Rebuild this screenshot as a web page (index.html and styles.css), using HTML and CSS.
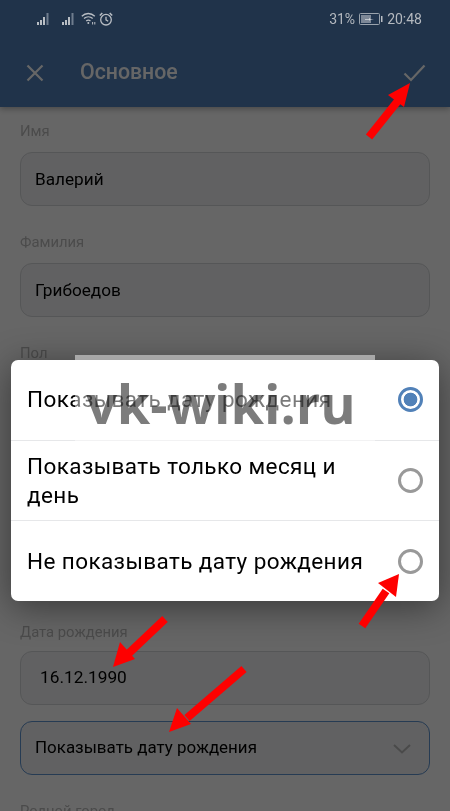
FILE: index.html
```html
<!DOCTYPE html>
<html lang="ru">
<head>
<meta charset="utf-8">
<title>Основное</title>
<link rel="stylesheet" href="styles.css">
</head>
<body>
<div class="app">
  <div class="statusbar">
    <div class="status-left">
      <svg class="sig" width="14" height="14" viewBox="0 0 14 14"><g fill="#b9bec4"><rect x="0" y="10" width="2" height="3"/><rect x="3" y="8" width="2" height="5"/><rect x="6" y="5" width="2" height="8"/></g><rect x="9.5" y="1" width="2" height="12" fill="#6f7d8d"/></svg>
      <svg class="sig sig2" width="14" height="14" viewBox="0 0 14 14"><g fill="#b9bec4"><rect x="0" y="10" width="2" height="3"/><rect x="3" y="8" width="2" height="5"/><rect x="6" y="5" width="2" height="8"/></g><rect x="9.5" y="1" width="2" height="12" fill="#6f7d8d"/></svg>
      <svg class="wifi" width="15" height="13" viewBox="0 0 15 13" fill="none" stroke="#b9bec4" stroke-width="1.3"><path d="M.8 4.2C4.4 .6 10 .6 13.8 4.2"/><path d="M3 6.6c2.500-2.300 6.200-2.300 8.700 0"/><path d="M5.200 8.900c1.300-1 3-1 4.300 0"/><circle cx="7.300" cy="11" r="1" fill="#b9bec4" stroke="none"/><path d="M11.600 10v2.500M13.800 10v2.500" stroke-width="1"/></svg>
      <svg class="alarm" width="14" height="14" viewBox="0 0 14 14" fill="none" stroke="#b9bec4" stroke-width="1.300"><circle cx="7" cy="7.700" r="5.300"/><path d="M7 4.700v3.200l2.200 1.400"/><path d="M.8 3.500 3.300 1M13.200 3.500 10.700 1" stroke-width="1.500"/></svg>
    </div>
    <div class="status-right">
      <span class="status-text">31%</span>
      <svg class="battery" width="24" height="12" viewBox="0 0 24 12"><rect x=".5" y=".5" width="20" height="11" rx="1" fill="#22364f" stroke="#9aa3ad"/><rect x="2" y="2" width="10" height="8" fill="#7d8897"/><path d="M6 6h4l1-1.500V6h4l-4 .8v1.200L10 6.800H6z" fill="#d8dbdf"/><rect x="22" y="3" width="1.500" height="6" fill="#b9bec4"/></svg>
      <span class="status-text">20:48</span>
    </div>
  </div>

  <header class="toolbar">
    <svg class="tool-icon" width="18" height="18" viewBox="0 0 18 18" fill="none" stroke="#fff" stroke-width="2.200"><path d="M1.500 1.500l15 15M16.500 1.500l-15 15"/></svg>
    <h1 class="title">Основное</h1>
    <svg class="tool-check" width="23" height="18" viewBox="0 0 23 18" fill="none" stroke="#fff" stroke-width="2.200"><path d="M1.500 9.500l6.500 6.500L21.500 1.500"/></svg>
  </header>

  <main class="form">
    <section class="group">
      <div class="label">Имя</div>
      <div class="field">Валерий</div>
    </section>
    <section class="group">
      <div class="label">Фамилия</div>
      <div class="field">Грибоедов</div>
    </section>
    <section class="group group-gender">
      <div class="label">Пол</div>
      <div class="field">Мужской</div>
    </section>
    <section class="group">
      <div class="label label-tight">Дата рождения</div>
      <div class="field field-date">16.12.1990</div>
      <div class="field field-select">
        <span>Показывать дату рождения</span>
        <svg width="18" height="10" viewBox="0 0 18 10" fill="none" stroke="#b8b8b8" stroke-width="2"><path d="M1 1l8 7.500L17 1"/></svg>
      </div>
    </section>
    <section class="group">
      <div class="label">Родной город</div>
    </section>
  </main>

  <div class="scrim"></div>

  <div class="dialog">
    <div class="option">
      <span class="option-text">Показывать дату рождения</span>
      <span class="radio radio-on"></span>
    </div>
    <div class="option">
      <span class="option-text">Показывать только месяц и день</span>
      <span class="radio"></span>
    </div>
    <div class="option">
      <span class="option-text">Не показывать дату рождения</span>
      <span class="radio"></span>
    </div>
  </div>

  <div class="watermark"><span class="watermark-text">vk-wiki.ru</span></div>

  <svg class="arrows" width="450" height="811" viewBox="0 0 450 811" fill="#fe0000" stroke="#fe0000" stroke-width="8">
    <path d="M369 137 401 97"/><path d="M410 83 388 95 404 107z" stroke="none"/>
    <path d="M165 619 128 654"/><path d="M113 667 120 642 135 659z" stroke="none"/>
    <path d="M244 669 187 718"/><path d="M169 732 177 708 191 724z" stroke="none"/>
    <path d="M362 626 386 591"/><path d="M399 574 378 583 396 597z" stroke="none"/>
  </svg>
</div>
</body>
</html>
```

FILE: styles.css
```css
* { box-sizing: border-box; }
html, body { margin: 0; height: 100%; }
body { font-family: Roboto, "Liberation Sans", sans-serif; overflow: hidden; background: #fff; }

.app { width: 450px; height: 811px; overflow: hidden; display: flex; flex-direction: column; background: #fff; }

.statusbar {
  position: relative; z-index: 2;
  height: 40px; flex: none;
  display: flex; align-items: center; justify-content: space-between;
  padding: 0 28px 3px 37px;
}
.status-left { display: flex; align-items: center; }
.sig2 { margin-left: 11px; }
.wifi { margin-left: 5px; }
.alarm { margin-left: 3px; }
.status-right { display: flex; align-items: center; gap: 4px; }
.status-text { font-size: 14px; color: #b4b9bf; }

.toolbar {
  height: 107px; flex: none; margin-top: -40px;
  padding: 40px 24px 0 26px;
  display: flex; align-items: center;
  background: #5181b8;
  box-shadow: 0 2px 6px rgba(0,0,0,.3);
  position: relative;
}
.tool-icon { flex: none; margin-top: -2px; }
.title { margin: -3px 0 0 36px; flex: 1; font-size: 21.300px; font-weight: 500; color: #fff; line-height: 1; }
.tool-check { flex: none; margin-top: -2px; }

.form { flex: none; padding: 15px 20px 0; }
.group { margin-bottom: 27px; }
.group-gender { margin-bottom: 195px; }
.label { height: 20px; line-height: 18px; font-size: 14.800px; color: #bcbcbc; margin-bottom: 10px; }
.label-tight { margin-bottom: 8px; }
.field {
  height: 54px; padding: 0 14px;
  display: flex; align-items: center; justify-content: space-between;
  border: 1px solid #d4d6d9; border-radius: 12px;
  background: #f2f3f5;
  font-size: 17.200px; color: #000;
}
.field-date { padding-left: 19px; font-size: 17.300px; padding-bottom: 2px; }
.field-select { margin-top: 16px; border-color: #5f93cf; padding: 0 18px 2px 14px; font-size: 16.950px; }
.field-select svg { margin-top: 4px; }

.scrim { position: absolute; left: 0; top: 0; width: 450px; height: 811px; background: rgba(0,0,0,.6); }

.dialog {
  position: absolute; left: 11px; top: 360px; width: 428px; height: 241px;
  background: #fff; border-radius: 7px;
  box-shadow: 0 6px 36px rgba(0,0,0,.45);
  display: flex; flex-direction: column;
}
.option {
  flex: 1; display: flex; align-items: center; justify-content: space-between; gap: 20px;
  padding: 0 16px;
  border-top: 1px solid #e6e7e9;
}
.option:first-child { border-top: 0; }
.option-text { font-size: 22.500px; line-height: 29px; color: #000; letter-spacing: .4px; flex: 1; }
.radio { flex: none; width: 25px; height: 25px; border-radius: 50%; border: 3px solid #999; background: #fff; }
.radio-on { border-color: #5181b8; background: radial-gradient(circle, #5181b8 0 6.500px, #fff 7.200px); }

.watermark {
  position: absolute; left: 75px; top: 355px; width: 300px; height: 86px;
  background: rgba(255,255,255,.48);
  display: flex; align-items: center; justify-content: center;
}
.watermark-text {
  font-family: "Open Sans", sans-serif; font-size: 54px; font-weight: 700; line-height: 1;
  color: #7c7c7c; mix-blend-mode: multiply; white-space: nowrap; margin: 10px 8px 0 0;
}

.arrows { position: absolute; left: 0; top: 0; pointer-events: none; }
```
